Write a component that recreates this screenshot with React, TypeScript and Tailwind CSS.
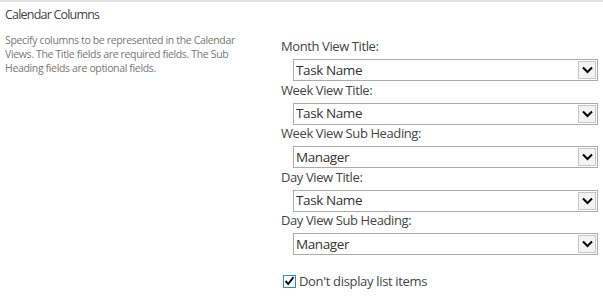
import React from 'react';

const fields = [
  { label: 'Month View Title:', value: 'Task Name' },
  { label: 'Week View Title:', value: 'Task Name' },
  { label: 'Week View Sub Heading:', value: 'Manager' },
  { label: 'Day View Title:', value: 'Task Name' },
  { label: 'Day View Sub Heading:', value: 'Manager' },
];

const Dropdown = ({ value }: { value: string }) => (
  <div className="ml-3 mt-[3px] flex h-[22px] w-[305px] items-stretch border border-[#ababab] bg-white">
    <div className="flex flex-1 items-center pl-[2px] text-[13.5px] tracking-[-0.4px] text-[#333]">{value}</div>
    <div className="m-[1px] flex w-[18px] items-center justify-center border border-[#c6c6c6] bg-[#f3f3f3]">
      <svg width="11" height="8" viewBox="0 0 11 8">
        <path d="M1 1.5 L5.5 6 L10 1.5" fill="none" stroke="#000" strokeWidth="2" />
      </svg>
    </div>
  </div>
);

export default function App() {
  return (
    <div
      className="h-[298px] w-[603px] overflow-hidden bg-white"
      style={{ fontFamily: '"Open Sans", "Noto Sans", sans-serif' }}
    >
      <div className="border-t-2 border-[#e1e1e1]">
        <div className="flex">
          <div className="w-[276px] pl-[5px] pt-[3px]">
            <h3 className="text-[12.5px] leading-5 tracking-[-0.8px] text-[#444]">Calendar Columns</h3>
            <p className="mt-[8px] pr-8 text-[10.5px] leading-[14px] tracking-[-0.35px] text-[#777]">
              Specify columns to be represented in the Calendar Views. The Title fields are required fields. The Sub
              Heading fields are optional fields.
            </p>
          </div>
          <div className="pl-[5px] pt-[34px]">
            {fields.map((f) => (
              <div key={f.label} className="h-[43.5px]">
                <div className="h-5 text-[13px] leading-5 tracking-[-0.4px] text-[#444]">{f.label}</div>
                <Dropdown value={f.value} />
              </div>
            ))}
            <label className="mt-[18px] flex items-center gap-[3px] pl-[2px] text-[13px] tracking-[-0.33px] text-[#444]">
              <span className="flex h-[13px] w-[13px] items-center justify-center border border-[#2a8dd4] bg-white">
                <svg width="11" height="10" viewBox="0 0 11 10">
                  <path d="M1.5 5 L4.2 8 L9.5 1.2" fill="none" stroke="#111" strokeWidth="2" />
                </svg>
              </span>
              Don't display list items
            </label>
          </div>
        </div>
      </div>
    </div>
  );
}
